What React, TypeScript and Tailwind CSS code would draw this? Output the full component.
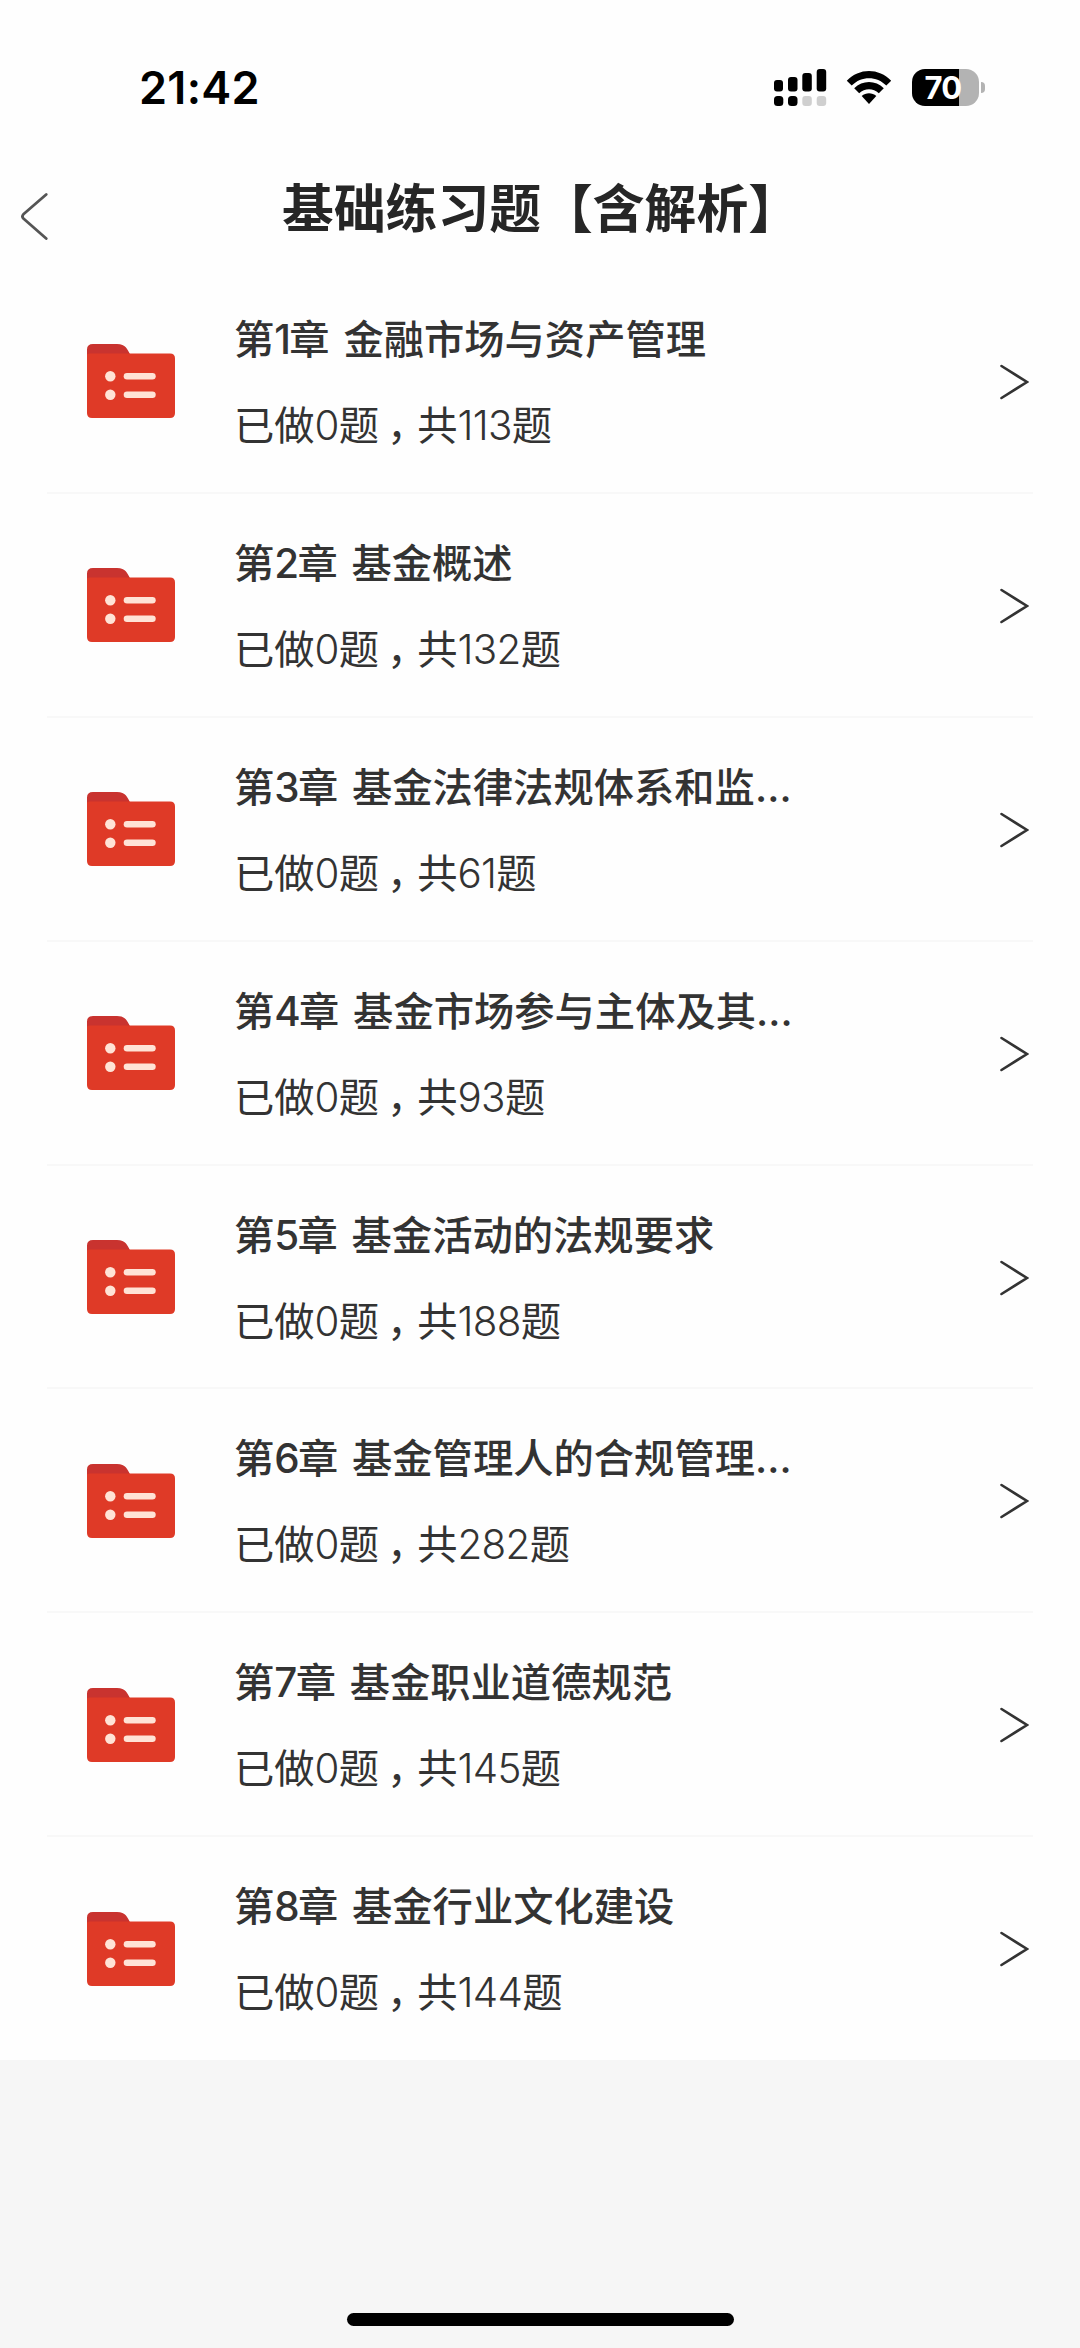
const chapters = [
  { no: 1, title: '金融市场与资产管理', total: 113 },
  { no: 2, title: '基金概述', total: 132 },
  { no: 3, title: '基金法律法规体系和监…', total: 61 },
  { no: 4, title: '基金市场参与主体及其…', total: 93 },
  { no: 5, title: '基金活动的法规要求', total: 188 },
  { no: 6, title: '基金管理人的合规管理…', total: 282 },
  { no: 7, title: '基金职业道德规范', total: 145 },
  { no: 8, title: '基金行业文化建设', total: 144 },
];

function Signal() {
  return (
    <svg className="h-[38px] w-[53px]" viewBox="0 0 53 38">
      <rect x="0" y="11" width="9" height="11.5" rx="3" />
      <rect x="14" y="8" width="9.5" height="14.5" rx="3" />
      <rect x="28.3" y="4" width="9.5" height="18.5" rx="3" />
      <rect x="42.7" y="0" width="9.5" height="22.5" rx="3" />
      <rect x="0" y="27" width="9.3" height="10" rx="3.5" />
      <rect x="14" y="27" width="9.5" height="10" rx="3.5" />
      <rect x="28.3" y="27" width="9.5" height="10" rx="3" fill="#cfcfcf" />
      <rect x="42.7" y="27" width="9.5" height="10" rx="3" fill="#cfcfcf" />
    </svg>
  );
}

function Wifi() {
  return (
    <svg className="h-[36px] w-[46px]" viewBox="0 0 46 36">
      <path d="M0.8 10.8C13-2.3 33-2.3 45.2 10.8L40.3 15.6C30.8 5.8 15.2 5.8 5.7 15.6Z" />
      <path d="M8.2 18.3C16.4 9.8 29.6 9.8 37.8 18.3L32.8 23.2C27.3 17.8 18.7 17.8 13.2 23.2Z" />
      <path d="M15.7 26C19.8 22.2 26.2 22.2 30.3 26L23 34Z" />
    </svg>
  );
}

function Battery() {
  return (
    <div className="flex items-center gap-[2px]">
      <div className="flex h-[37px] w-[67px] items-center justify-center rounded-[13px] bg-[linear-gradient(to_right,#000_47px,#b3b3b3_47px)] pr-[5px] text-[31px] leading-none font-bold tracking-[-0.8px] text-white">
        70
      </div>
      <div className="h-[11px] w-[4px] rounded-r-full bg-[#b3b3b3]" />
    </div>
  );
}

function Folder() {
  return (
    <svg className="h-[75px] w-[88px]" viewBox="0 0 88 75">
      <path d="M0 14V5.5Q0 0 6 0H30C39 0 40 5 43.5 11V16H0Z" fill="#c9332f" />
      <path d="M0 10.5Q1 9.5 3 9.5H83Q88 9.5 88 14.5V69Q88 74 83 74H5Q0 74 0 69Z" fill="#df3a27" />
      <g fill="#ffe3d6">
        <circle cx="23.3" cy="32.3" r="5.2" />
        <circle cx="23.3" cy="50.7" r="5.2" />
        <rect x="36.7" y="29" width="32" height="6.6" rx="3.3" />
        <rect x="36.7" y="47.4" width="32" height="6.6" rx="3.3" />
      </g>
    </svg>
  );
}

function ChapterRow({ no, title, total }: { no: number; title: string; total: number }) {
  return (
    <li className="mx-[47px] flex h-[223.9px] items-center border-b-2 border-[#f8f8f8] pt-[2px] pl-[40px] last:border-transparent">
      <Folder />
      <div className="ml-[59px] flex flex-1 flex-col pt-[2px] whitespace-nowrap text-[#333]">
        <h2 className="text-[40.3px] leading-[56px] font-medium [word-spacing:3px]">
          第<span className="tracking-[-1.7px]">{no}</span>章 {title}
        </h2>
        <p className="mt-[30px] text-[40.3px] leading-[56px] font-normal">
          已做<span className="tracking-[-0.8px] [font-weight:350]">0</span>题
          <span className="pr-[10px] pl-[8px] [font-feature-settings:'halt']">，</span>
          共<span className="tracking-[-0.6px] [font-weight:350]">{total}</span>题
        </p>
      </div>
      <svg className="mr-[4px] h-[36px] w-[30px]" viewBox="0 0 30 36" fill="none" stroke="#333" strokeWidth="2.6" strokeLinecap="round">
        <path d="M2.5 2L28 18L2.5 34" />
      </svg>
    </li>
  );
}

export default function App() {
  return (
    <div lang="zh-CN" className="flex h-[2348px] w-[1080px] flex-col bg-[#f6f6f6] font-[Inter,'Noto_Sans_CJK_SC',sans-serif]">
      <div className="h-[2060px] bg-[#fefefe]">
        <div className="flex h-[136px] items-start justify-between pt-[69px] pr-[95px] pl-[139px]">
          <div className="text-[45px] leading-[38px] font-semibold tracking-[0.3px] text-black">21:42</div>
          <div className="flex items-start">
            <Signal />
            <div className="ml-[19px] pt-px"><Wifi /></div>
            <div className="ml-[20px]"><Battery /></div>
          </div>
        </div>
        <header className="flex h-[134px] items-start">
          <svg className="mt-[56px] ml-[20px] h-[50px] w-[30px]" viewBox="0 0 30 50" fill="none" stroke="#555" strokeWidth="2.8" strokeLinecap="round" strokeLinejoin="round">
            <path d="M26.2 2.5L3.4 22.3Q1.5 24.5 3.4 26.5L26.2 46.5" />
          </svg>
          <h1 className="mt-[37px] ml-[232px] text-[51.8px] leading-[72px] font-bold whitespace-nowrap text-[#262626]">基础练习题【含解析】</h1>
        </header>
        <ul>
          {chapters.map((c) => (
            <ChapterRow key={c.no} {...c} />
          ))}
        </ul>
      </div>
      <div className="mt-[253px] h-[13px] w-[387px] self-center rounded-full bg-black" />
    </div>
  );
}
